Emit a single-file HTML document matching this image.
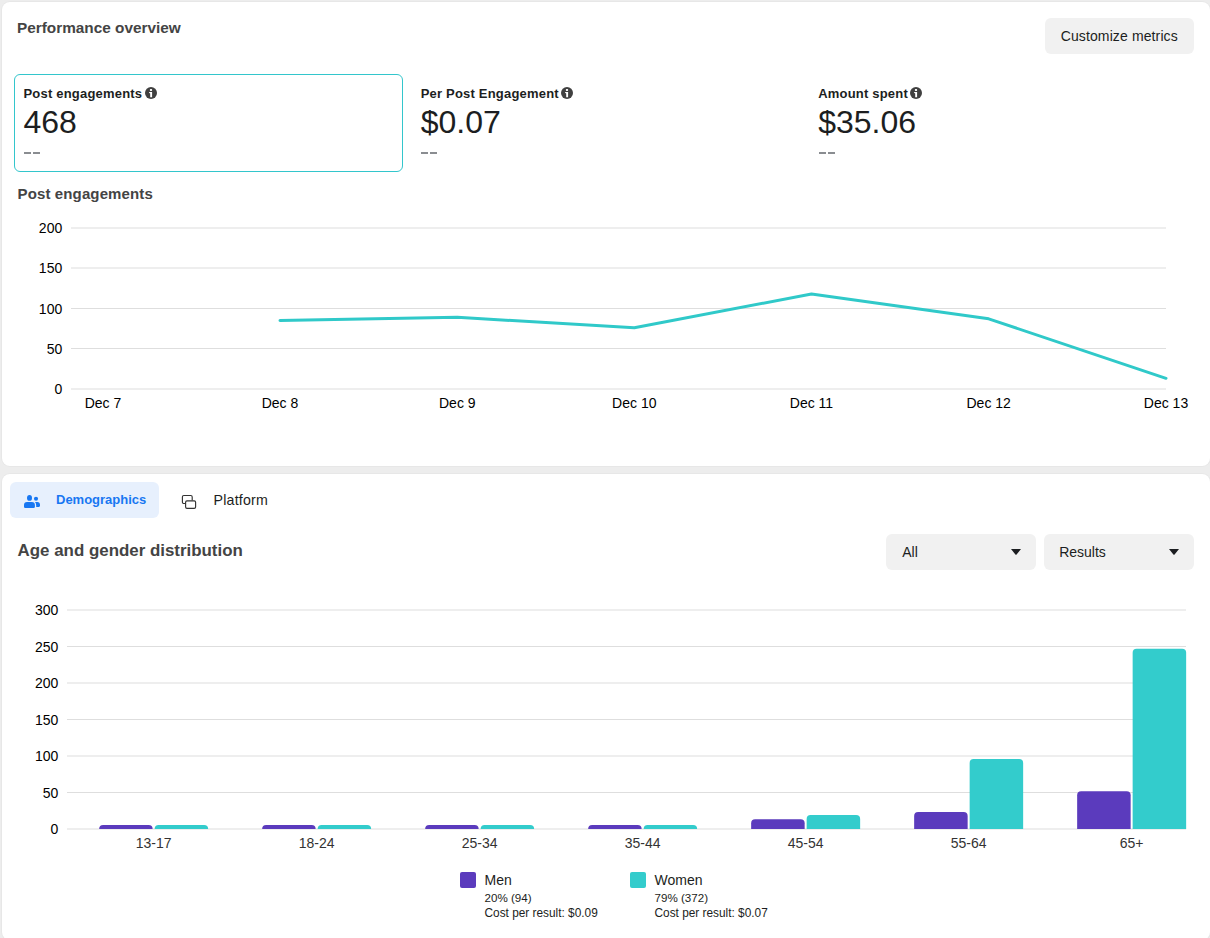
<!DOCTYPE html>
<html><head><meta charset="utf-8"><style>
html,body{margin:0;padding:0;}
body{width:1210px;height:938px;overflow:hidden;background:#ededed;position:relative;font-family:"Liberation Sans", sans-serif;}
.card{position:absolute;background:#fff;border-radius:8px;box-shadow:0 0 0 1px rgba(0,0,0,0.025);}
.t{position:absolute;white-space:nowrap;line-height:1;}
.btn{position:absolute;background:#f1f1f1;border-radius:6px;}
</style></head><body>
<div class="card" style="left:2px;top:2px;width:1208px;height:464px;"></div>
<div class="card" style="left:2px;top:474px;width:1208px;height:466px;"></div>
<div class="t" style="left:17.00px;top:20.01px;font-size:15.35px;font-weight:700;color:#444;">Performance overview</div>
<div class="btn" style="left:1045px;top:18px;width:149px;height:36px;"></div>
<div class="t" style="left:1060.70px;top:29.15px;font-size:14px;font-weight:400;color:#1c1e21;letter-spacing:0.12px;">Customize metrics</div>
<div style="position:absolute;left:14px;top:74px;width:387px;height:96px;border:1px solid #33c6cc;border-radius:6px;"></div>
<div class="t" style="left:23.50px;top:87.00px;font-size:13px;font-weight:700;color:#1c1e21;letter-spacing:0.2px;">Post engagements</div>
<svg style="position:absolute;left:145px;top:87px" width="12" height="12" viewBox="0 0 12 12"><circle cx="6" cy="6" r="6" fill="#404040"/><rect x="4.9" y="2" width="2.2" height="1.95" rx="0.6" fill="#fff"/><path d="M3.9 5.1H7.1V10.2H5.2V6.5Q4.2 6.3 3.9 5.1Z" fill="#fff"/></svg>
<div class="t" style="left:23.50px;top:106.01px;font-size:32px;font-weight:400;color:#1c1e21;">468</div>
<div style="position:absolute;left:23.8px;top:152px;width:7px;height:1.5px;background:#8a8d91"></div>
<div style="position:absolute;left:32.8px;top:152px;width:7px;height:1.5px;background:#8a8d91"></div>
<div class="t" style="left:420.70px;top:87.00px;font-size:13px;font-weight:700;color:#1c1e21;letter-spacing:0.2px;">Per Post Engagement</div>
<svg style="position:absolute;left:561px;top:87px" width="12" height="12" viewBox="0 0 12 12"><circle cx="6" cy="6" r="6" fill="#404040"/><rect x="4.9" y="2" width="2.2" height="1.95" rx="0.6" fill="#fff"/><path d="M3.9 5.1H7.1V10.2H5.2V6.5Q4.2 6.3 3.9 5.1Z" fill="#fff"/></svg>
<div class="t" style="left:420.70px;top:106.01px;font-size:32px;font-weight:400;color:#1c1e21;">$0.07</div>
<div style="position:absolute;left:421.0px;top:152px;width:7px;height:1.5px;background:#8a8d91"></div>
<div style="position:absolute;left:430.0px;top:152px;width:7px;height:1.5px;background:#8a8d91"></div>
<div class="t" style="left:818.20px;top:87.00px;font-size:13px;font-weight:700;color:#1c1e21;letter-spacing:0.2px;">Amount spent</div>
<svg style="position:absolute;left:910px;top:87px" width="12" height="12" viewBox="0 0 12 12"><circle cx="6" cy="6" r="6" fill="#404040"/><rect x="4.9" y="2" width="2.2" height="1.95" rx="0.6" fill="#fff"/><path d="M3.9 5.1H7.1V10.2H5.2V6.5Q4.2 6.3 3.9 5.1Z" fill="#fff"/></svg>
<div class="t" style="left:818.20px;top:106.01px;font-size:32px;font-weight:400;color:#1c1e21;">$35.06</div>
<div style="position:absolute;left:818.5px;top:152px;width:7px;height:1.5px;background:#8a8d91"></div>
<div style="position:absolute;left:827.5px;top:152px;width:7px;height:1.5px;background:#8a8d91"></div>
<div class="t" style="left:17.60px;top:185.80px;font-size:15px;font-weight:700;color:#444;letter-spacing:0.12px;">Post engagements</div>
<svg style="position:absolute;left:0;top:0" width="1210" height="470"><rect x="71" y="227.5" width="1095" height="1" fill="#dedede"/><rect x="71" y="267.5" width="1095" height="1" fill="#dedede"/><rect x="71" y="308.0" width="1095" height="1" fill="#dedede"/><rect x="71" y="348.0" width="1095" height="1" fill="#dedede"/><rect x="71" y="388.5" width="1095" height="1" fill="#dedede"/><polyline fill="none" stroke="#30c9c9" stroke-width="3" stroke-linejoin="round" stroke-linecap="round" points="280,320.5 457.3,317.3 634.3,327.7 811.5,294 988.7,318.8 1166,378.3"/></svg>
<div class="t" style="right:1147.80px;top:221.15px;font-size:14px;font-weight:400;color:#000;">200</div>
<div class="t" style="right:1147.80px;top:261.15px;font-size:14px;font-weight:400;color:#000;">150</div>
<div class="t" style="right:1147.80px;top:301.65px;font-size:14px;font-weight:400;color:#000;">100</div>
<div class="t" style="right:1147.80px;top:341.65px;font-size:14px;font-weight:400;color:#000;">50</div>
<div class="t" style="right:1147.80px;top:382.15px;font-size:14px;font-weight:400;color:#000;">0</div>
<div class="t" style="left:-197.00px;width:600px;text-align:center;top:396.05px;font-size:14px;font-weight:400;color:#000;">Dec 7</div>
<div class="t" style="left:-20.00px;width:600px;text-align:center;top:396.05px;font-size:14px;font-weight:400;color:#000;">Dec 8</div>
<div class="t" style="left:157.30px;width:600px;text-align:center;top:396.05px;font-size:14px;font-weight:400;color:#000;">Dec 9</div>
<div class="t" style="left:334.30px;width:600px;text-align:center;top:396.05px;font-size:14px;font-weight:400;color:#000;">Dec 10</div>
<div class="t" style="left:511.50px;width:600px;text-align:center;top:396.05px;font-size:14px;font-weight:400;color:#000;">Dec 11</div>
<div class="t" style="left:688.70px;width:600px;text-align:center;top:396.05px;font-size:14px;font-weight:400;color:#000;">Dec 12</div>
<div class="t" style="left:866.00px;width:600px;text-align:center;top:396.05px;font-size:14px;font-weight:400;color:#000;">Dec 13</div>
<div style="position:absolute;left:10px;top:482px;width:149px;height:36px;background:#e7f0fd;border-radius:6px;"></div>
<svg style="position:absolute;left:23px;top:494px" width="18" height="15" viewBox="0 0 18 15"><ellipse cx="6.5" cy="3.9" rx="2.5" ry="2.95" fill="#1877f2"/><circle cx="13" cy="4.7" r="2.05" fill="#1877f2"/><path d="M1 12.8V11.1Q1 8.1 4 8.1H8.9Q11.9 8.1 11.9 11.1V12.8Q11.9 14 10.7 14H2.2Q1 14 1 12.8Z" fill="#1877f2"/><path d="M12 8.1H14.3Q17 8.1 17 11V11.8Q17 12.9 15.9 12.9H13.2V11.6Q13.2 9.5 12 8.1Z" fill="#1877f2"/></svg>
<div class="t" style="left:56.00px;top:493.40px;font-size:13px;font-weight:700;color:#1877f2;">Demographics</div>
<svg style="position:absolute;left:181px;top:494px" width="16" height="16" viewBox="0 0 16 16"><path d="M4 9.5H2.8c-.8 0-1.4-.6-1.4-1.4V2.9c0-.8.6-1.4 1.4-1.4h7c.8 0 1.4.6 1.4 1.4V6.5" fill="none" stroke="#333" stroke-width="1.15"/><rect x="4.6" y="6.8" width="10" height="7.6" rx="1.4" fill="#fff" stroke="#333" stroke-width="1.15"/></svg>
<div class="t" style="left:213.60px;top:492.68px;font-size:14.2px;font-weight:400;color:#1c1e21;letter-spacing:0.2px;">Platform</div>
<div class="t" style="left:17.60px;top:543.49px;font-size:16.9px;font-weight:700;color:#444;">Age and gender distribution</div>
<div class="btn" style="left:886px;top:534px;width:150px;height:36px;"></div>
<div class="t" style="left:902.20px;top:545.15px;font-size:14px;font-weight:400;color:#1c1e21;">All</div>
<svg style="position:absolute;left:1011px;top:549px" width="10" height="6" viewBox="0 0 10 6"><path d="M0 0h10L5.6 5.5c-.3.4-.9.4-1.2 0z" fill="#1c1e21"/></svg>
<div class="btn" style="left:1044px;top:534px;width:150px;height:36px;"></div>
<div class="t" style="left:1059.20px;top:545.15px;font-size:14px;font-weight:400;color:#1c1e21;">Results</div>
<svg style="position:absolute;left:1169px;top:549px" width="10" height="6" viewBox="0 0 10 6"><path d="M0 0h10L5.6 5.5c-.3.4-.9.4-1.2 0z" fill="#1c1e21"/></svg>
<svg style="position:absolute;left:0;top:0" width="1210" height="938"><rect x="67" y="609.5" width="1119" height="1" fill="#dedede"/><rect x="67" y="646.0" width="1119" height="1" fill="#dedede"/><rect x="67" y="682.5" width="1119" height="1" fill="#dedede"/><rect x="67" y="719.0" width="1119" height="1" fill="#dedede"/><rect x="67" y="755.5" width="1119" height="1" fill="#dedede"/><rect x="67" y="792.0" width="1119" height="1" fill="#dedede"/><rect x="67" y="828.5" width="1119" height="1" fill="#dedede"/><path d="M99.15 829V829q0-4 4-4H148.65q4 0 4 4V829z" fill="#5b3bbd"/><path d="M154.65 829V829q0-4 4-4H204.15q4 0 4 4V829z" fill="#33cccc"/><path d="M262.15 829V829q0-4 4-4H311.65q4 0 4 4V829z" fill="#5b3bbd"/><path d="M317.65 829V829q0-4 4-4H367.15q4 0 4 4V829z" fill="#33cccc"/><path d="M425.15 829V829q0-4 4-4H474.65q4 0 4 4V829z" fill="#5b3bbd"/><path d="M480.65 829V829q0-4 4-4H530.15q4 0 4 4V829z" fill="#33cccc"/><path d="M588.15 829V829q0-4 4-4H637.65q4 0 4 4V829z" fill="#5b3bbd"/><path d="M643.65 829V829q0-4 4-4H693.15q4 0 4 4V829z" fill="#33cccc"/><path d="M751.15 829V823.3q0-4 4-4H800.65q4 0 4 4V829z" fill="#5b3bbd"/><path d="M806.65 829V818.9q0-4 4-4H856.15q4 0 4 4V829z" fill="#33cccc"/><path d="M914.15 829V816.1q0-4 4-4H963.65q4 0 4 4V829z" fill="#5b3bbd"/><path d="M969.65 829V762.9q0-4 4-4H1019.15q4 0 4 4V829z" fill="#33cccc"/><path d="M1077.15 829V795.2q0-4 4-4H1126.65q4 0 4 4V829z" fill="#5b3bbd"/><path d="M1132.65 829V652.7q0-4 4-4H1182.15q4 0 4 4V829z" fill="#33cccc"/></svg>
<div class="t" style="right:1151.70px;top:603.15px;font-size:14px;font-weight:400;color:#000;">300</div>
<div class="t" style="right:1151.70px;top:639.65px;font-size:14px;font-weight:400;color:#000;">250</div>
<div class="t" style="right:1151.70px;top:676.15px;font-size:14px;font-weight:400;color:#000;">200</div>
<div class="t" style="right:1151.70px;top:712.65px;font-size:14px;font-weight:400;color:#000;">150</div>
<div class="t" style="right:1151.70px;top:749.15px;font-size:14px;font-weight:400;color:#000;">100</div>
<div class="t" style="right:1151.70px;top:785.65px;font-size:14px;font-weight:400;color:#000;">50</div>
<div class="t" style="right:1151.70px;top:822.15px;font-size:14px;font-weight:400;color:#000;">0</div>
<div class="t" style="left:-146.35px;width:600px;text-align:center;top:835.95px;font-size:14px;font-weight:400;color:#333;">13-17</div>
<div class="t" style="left:16.65px;width:600px;text-align:center;top:835.95px;font-size:14px;font-weight:400;color:#333;">18-24</div>
<div class="t" style="left:179.65px;width:600px;text-align:center;top:835.95px;font-size:14px;font-weight:400;color:#333;">25-34</div>
<div class="t" style="left:342.65px;width:600px;text-align:center;top:835.95px;font-size:14px;font-weight:400;color:#333;">35-44</div>
<div class="t" style="left:505.65px;width:600px;text-align:center;top:835.95px;font-size:14px;font-weight:400;color:#333;">45-54</div>
<div class="t" style="left:668.65px;width:600px;text-align:center;top:835.95px;font-size:14px;font-weight:400;color:#333;">55-64</div>
<div class="t" style="left:831.65px;width:600px;text-align:center;top:835.95px;font-size:14px;font-weight:400;color:#333;">65+</div>
<div style="position:absolute;left:460px;top:872px;width:16px;height:16px;border-radius:2px;background:#5b3bbd"></div>
<div class="t" style="left:484.50px;top:872.95px;font-size:14px;font-weight:400;color:#1c1e21;">Men</div>
<div class="t" style="left:484.50px;top:892.08px;font-size:11.6px;font-weight:400;color:#1c1e21;">20% (94)</div>
<div class="t" style="left:484.50px;top:907.97px;font-size:11.85px;font-weight:400;color:#1c1e21;">Cost per result: $0.09</div>
<div style="position:absolute;left:630px;top:872px;width:16px;height:16px;border-radius:2px;background:#33cccc"></div>
<div class="t" style="left:654.50px;top:872.95px;font-size:14px;font-weight:400;color:#1c1e21;">Women</div>
<div class="t" style="left:654.50px;top:892.08px;font-size:11.6px;font-weight:400;color:#1c1e21;">79% (372)</div>
<div class="t" style="left:654.50px;top:907.97px;font-size:11.85px;font-weight:400;color:#1c1e21;">Cost per result: $0.07</div>

</body></html>
